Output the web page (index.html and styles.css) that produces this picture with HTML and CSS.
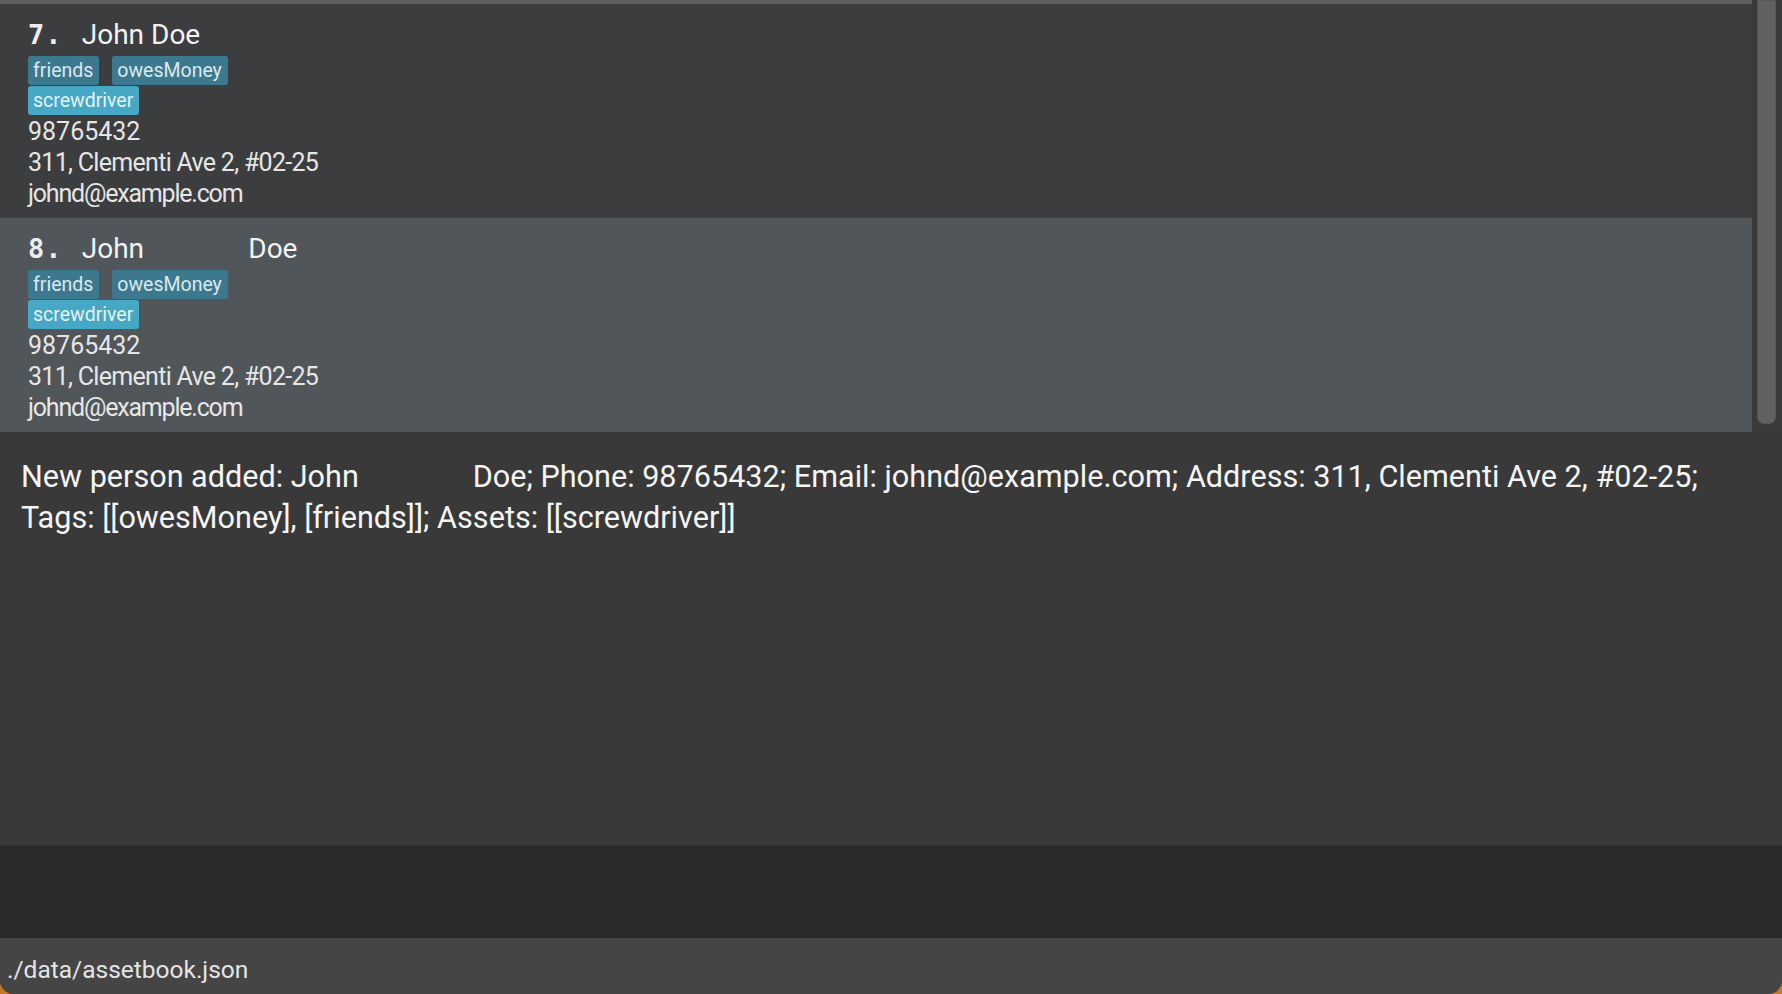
FILE: index.html
```html
<!DOCTYPE html>
<html lang="en">
<head>
<meta charset="utf-8">
<title>AssetBook</title>
<link rel="stylesheet" href="styles.css">
</head>
<body>
<div class="app">
  <div class="list-pane">
    <div class="cards">
      <div class="card">
        <div class="name-line"><span class="idx">7. </span><span class="name">John Doe</span></div>
        <div class="chips">
          <span class="chip tag">friends</span>
          <span class="chip tag">owesMoney</span>
        </div>
        <div class="chips">
          <span class="chip asset">screwdriver</span>
        </div>
        <div class="field phone">98765432</div>
        <div class="field address">311, Clementi Ave 2, #02-25</div>
        <div class="field email">johnd@example.com</div>
      </div>
      <div class="card selected">
        <div class="name-line"><span class="idx">8. </span><span class="name">John               Doe</span></div>
        <div class="chips">
          <span class="chip tag">friends</span>
          <span class="chip tag">owesMoney</span>
        </div>
        <div class="chips">
          <span class="chip asset">screwdriver</span>
        </div>
        <div class="field phone">98765432</div>
        <div class="field address">311, Clementi Ave 2, #02-25</div>
        <div class="field email">johnd@example.com</div>
      </div>
    </div>
    <div class="scrollbar"><div class="thumb"></div></div>
  </div>
  <div class="result">New person added: John               Doe; Phone: 98765432; Email: johnd@example.com; Address: 311, Clementi Ave 2, #02-25; Tags: [[owesMoney], [friends]]; Assets: [[screwdriver]]</div>
  <div class="command"></div>
  <div class="status">./data/assetbook.json</div>
</div>
</body>
</html>
```
FILE: styles.css
```css
html, body {
  margin: 0;
  padding: 0;
  height: 100%;
}
body {
  background: #c5772c;
  font-family: Roboto, "Liberation Sans", Arial, sans-serif;
  color: #e8e8e8;
}
.app {
  height: 994px;
  display: flex;
  flex-direction: column;
  background: #393939;
  border-radius: 0 0 14px 14px;
  overflow: hidden;
}
.list-pane {
  display: flex;
  height: 432px;
  background: #3a3a3a;
}
.cards {
  flex: 1;
  border-top: 4px solid #5d5f62;
}
.card {
  height: 214px;
  box-sizing: border-box;
  padding: 13px 0 0 28px;
  background: #3c3d3f;
}
.card.selected {
  background: #50565a;
}
.name-line {
  height: 36px;
  line-height: 36px;
  font-size: 28px;
  color: #f2f2f2;
  white-space: pre;
  margin-bottom: 3px;
}
.idx {
  font-family: "DejaVu Sans Mono", "Liberation Mono", monospace;
  font-weight: bold;
  font-size: 27px;
  letter-spacing: 1px;
  margin-right: 2px;
  color: #ececec;
}
.chips {
  display: flex;
  gap: 13px;
  height: 29px;
  margin-bottom: 1px;
}
.chip {
  display: inline-block;
  height: 29px;
  line-height: 29px;
  font-size: 19.5px;
  padding: 0 6px 0 5px;
  border-radius: 3px;
  color: #dce8ee;
}
.chip.tag {
  background: #3d798e;
}
.chip.asset {
  background: #46a8c5;
  color: #e6f2f7;
}
.field {
  font-size: 25px;
  line-height: 31px;
  color: #e6e6e6;
}
.field.address {
  letter-spacing: -0.7px;
}
.field.email {
  letter-spacing: -1.2px;
}
.scrollbar {
  width: 30px;
  flex: none;
  background: #3a3a3a;
}
.thumb {
  width: 19px;
  height: 424px;
  margin-left: 5px;
  background: #616161;
  border: 1px solid #575757;
  box-sizing: border-box;
  border-radius: 0 0 7px 7px;
}
.result {
  flex: none;
  height: 413px;
  box-sizing: border-box;
  padding: 24px 40px 0 21px;
  font-size: 30.6px;
  line-height: 41px;
  color: #f4f4f4;
  white-space: pre-wrap;
  background: #393939;
}
.command {
  flex: none;
  height: 93px;
  background: #2a2a2a;
  border-top: 1px solid #333333;
  box-sizing: border-box;
}
.status {
  flex: 1;
  background: #454545;
  font-size: 24.5px;
  line-height: 56px;
  padding: 4px 0 0 7px;
  box-sizing: border-box;
  color: #e4e4e4;
}
```
